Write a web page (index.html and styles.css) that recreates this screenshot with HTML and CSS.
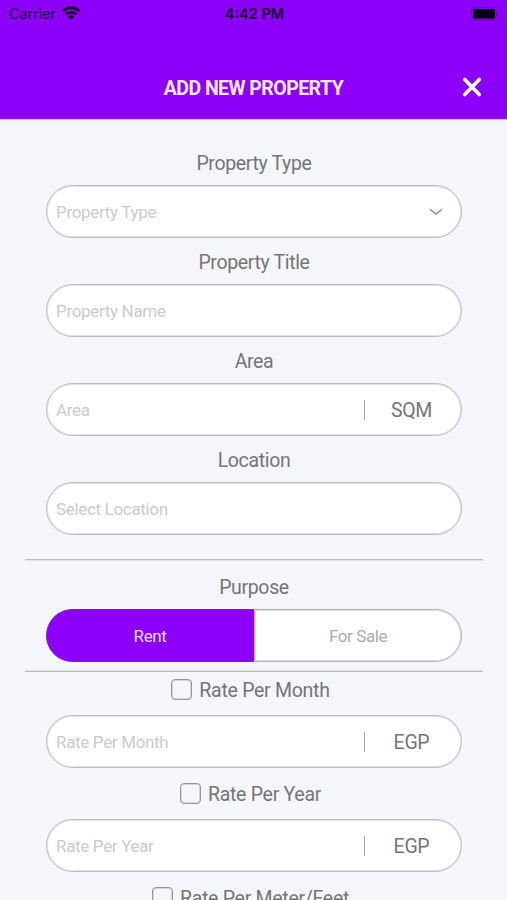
FILE: index.html
```html
<!DOCTYPE html>
<html lang="en">
<head>
<meta charset="utf-8">
<title>Add New Property</title>
<link rel="stylesheet" href="styles.css">
</head>
<body>
<header class="header">
  <div class="status">
    <div class="carrier"><span>Carrier</span>
      <svg width="18" height="14" viewBox="0 0 18 14" fill="none" stroke="#16002b" stroke-width="2.9"><path d="M.9 5.2C5.5.6 12.5.6 17.1 5.2M3.9 8.4C6.8 5.6 11.2 5.6 14.1 8.4"/><path d="M5.8 10.6Q9 8 12.2 10.6L9 13.7Z" fill="#16002b" stroke="none"/></svg>
    </div>
    <span class="time">4:42 PM</span>
    <svg class="battery" width="29" height="14" viewBox="0 0 29 14"><rect x=".7" y=".7" width="24.6" height="12.2" rx="3.3" fill="none" stroke="#6500b5"/><rect x="2" y="2" width="22" height="9.6" rx="1.8" fill="#000"/><path d="M26.8 4.8q2 2 0 4z" fill="#6500b5"/></svg>
  </div>
  <div class="titlebar">
    <h1>ADD NEW PROPERTY</h1>
    <svg class="close" width="20" height="20" viewBox="0 0 20 20" fill="none" stroke="#fff" stroke-width="3.6" stroke-linecap="round"><path d="M2.8 2.5l14.4 15M17.2 2.5l-14.4 15"/></svg>
  </div>
</header>
<main class="form">
  <div class="label">Property Type</div>
  <div class="field"><span class="hint">Property Type</span>
    <svg class="chevron" width="14" height="8" viewBox="0 0 14 8" fill="none" stroke="#a0a0a0" stroke-width="1.8" stroke-linecap="round" stroke-linejoin="round"><path d="M1.5 1.8L7 6l5.5-4.2"/></svg>
  </div>
  <div class="label">Property Title</div>
  <div class="field"><span class="hint">Property Name</span></div>
  <div class="label">Area</div>
  <div class="field"><span class="hint">Area</span><span class="unit">SQM</span></div>
  <div class="label">Location</div>
  <div class="field"><span class="hint">Select Location</span></div>
  <section class="purpose">
    <div class="label">Purpose</div>
    <div class="toggle"><div class="option active">Rent</div><div class="option">For Sale</div></div>
  </section>
  <label class="check month"><i class="box"></i><span>Rate Per Month</span></label>
  <div class="field"><span class="hint">Rate Per Month</span><span class="unit">EGP</span></div>
  <label class="check"><i class="box"></i><span>Rate Per Year</span></label>
  <div class="field"><span class="hint">Rate Per Year</span><span class="unit">EGP</span></div>
  <label class="check"><i class="box"></i><span>Rate Per Meter/Feet</span></label>
</main>
</body>
</html>
```
FILE: styles.css
```css
* { box-sizing: border-box; }
body {
  margin: 0;
  height: 900px;
  overflow: hidden;
  background: #f5f6fb;
  color: #757577;
  font-family: Roboto, sans-serif;
}
.header { height: 119px; background: #8c00fa; box-shadow: 0 1px #d9b8fb; }
.status {
  display: grid;
  grid-template-columns: 1fr auto 1fr;
  align-items: center;
  height: 27px;
  padding: 0 7px 0 9px;
  color: #25004a;
  font: 14.5px/27px Inter, sans-serif;
}
.carrier { display: flex; align-items: center; gap: 6px; letter-spacing: -.1px; }
.carrier svg { margin-top: -2px; }
.time { font-weight: 600; color: #18002e; }
.battery { justify-self: end; }
.titlebar {
  display: grid;
  grid-template-columns: 1fr auto 1fr;
  align-items: center;
  height: 92px;
  padding: 28px 25px 0 25px;
}
h1 {
  grid-column: 2;
  margin: 3px 0 0;
  color: #f4e6ff;
  font-size: 19.5px;
  font-weight: 700;
  letter-spacing: -.55px;
  line-height: 30px;
}
.close { justify-self: end; }
.form { padding: 20px 45px 0 46px; }
.label {
  height: 46px;
  font-size: 19.5px;
  letter-spacing: -.35px;
  line-height: 49px;
  text-align: center;
}
.field {
  display: flex;
  align-items: center;
  justify-content: space-between;
  height: 53px;
  padding-left: 9px;
  border: 1px solid #bbbbbd;
  border-radius: 27px;
  background: #fff;
  box-shadow: inset 0 0 0 1px #e3e3e4;
}
.hint { color: #cbcbcc; font-size: 17px; letter-spacing: -.33px; }
.chevron { margin-right: 18px; }
.unit {
  width: 97px;
  height: 20px;
  padding-right: 3px;
  border-left: 1px solid #aaa;
  font-size: 19.5px;
  letter-spacing: -.3px;
  line-height: 21px;
  text-align: center;
}
.purpose {
  height: 113px;
  margin: 24px -21px 0;
  padding: 0 21px;
  border-top: 1px solid #bcbcc0;
  border-bottom: 1px solid #bcbcc0;
  box-shadow: inset 0 1px #e2e3e7, inset 0 -1px #e2e3e7;
}
.purpose .label { height: 49px; line-height: 56px; }
.toggle { display: flex; height: 53px; }
.option {
  flex: 1;
  border: 1px solid #b3b3b5;
  border-radius: 0 27px 27px 0;
  background: #fff;
  box-shadow: inset 0 0 0 1px #dedee0;
  color: #aaa;
  font-size: 17px;
  letter-spacing: -.4px;
  line-height: 52px;
  text-align: center;
}
.active {
  border-color: #8c00fa;
  border-radius: 27px 0 0 27px;
  background: #8c00fa;
  box-shadow: none;
  color: #f0d9ff;
}
.check {
  display: flex;
  align-items: center;
  justify-content: center;
  gap: 7px;
  height: 51px;
  padding-right: 7px;
  font-size: 19.5px;
  letter-spacing: -.28px;
}
.check span { padding-top: 2px; }
.month { height: 43px; padding-bottom: 8px; }
.box {
  width: 21px;
  height: 21px;
  border: 1px solid #98989b;
  border-radius: 4px;
  box-shadow: inset 0 0 0 1px #d5d5d9;
}
```
